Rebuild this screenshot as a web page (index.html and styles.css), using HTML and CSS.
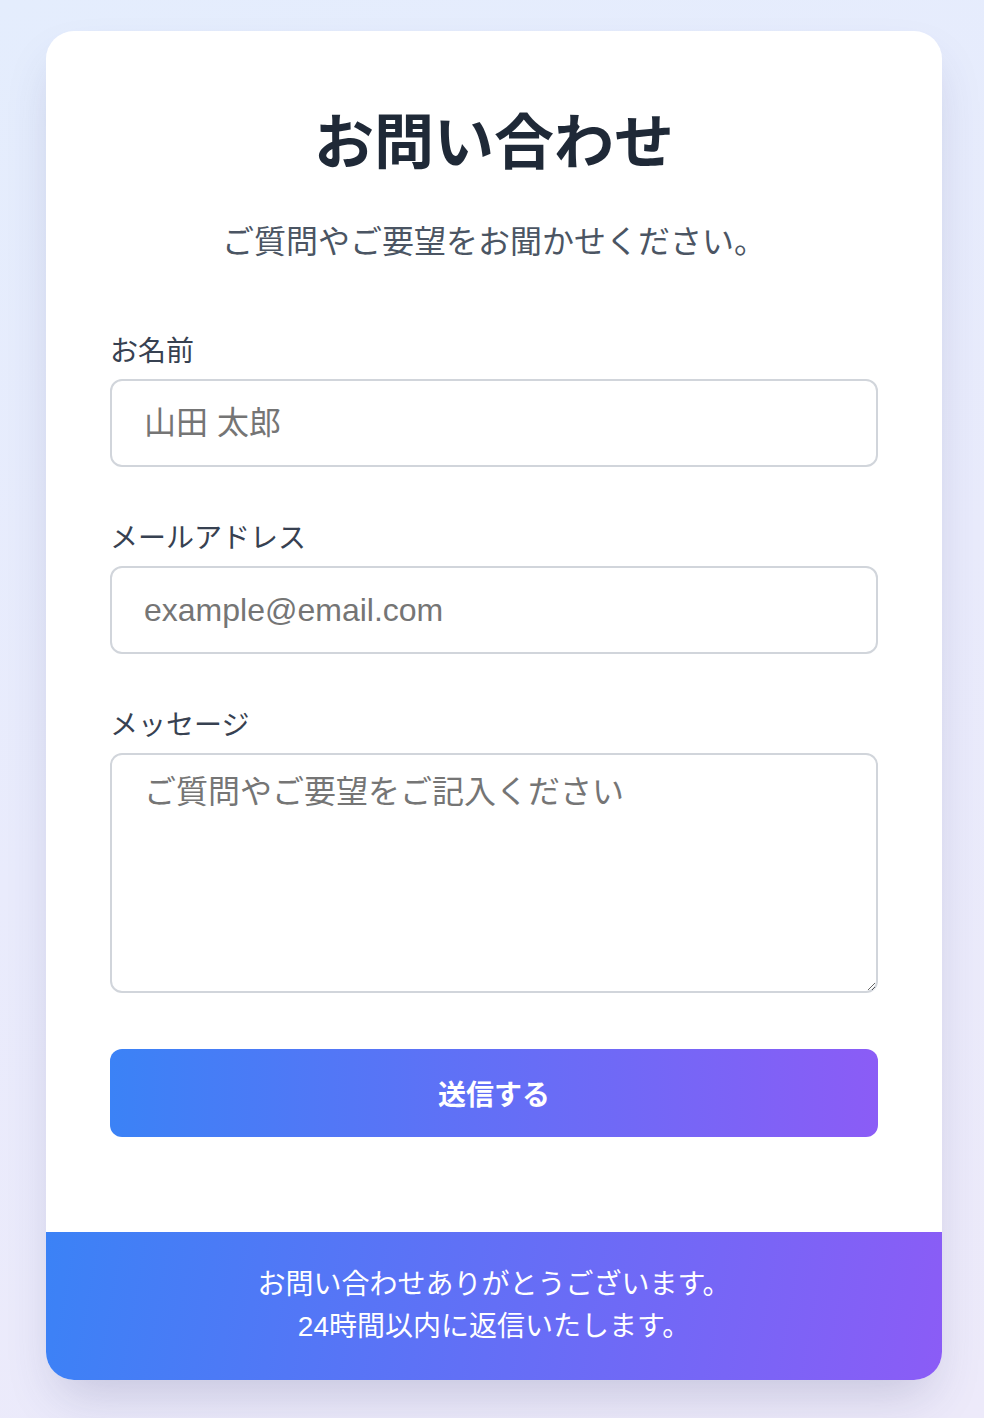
FILE: index.html
```html
<!DOCTYPE html>
<html lang="ja">
<head>
<meta charset="utf-8">
<title>お問い合わせ</title>
<link rel="stylesheet" href="styles.css">
</head>
<body>
<div class="card">
  <div class="content">
    <h1 class="title">お問い合わせ</h1>
    <p class="subtitle">ご質問やご要望をお聞かせください。</p>
    <form class="form">
      <div class="field">
        <label class="label" for="name">お名前</label>
        <input class="input" id="name" type="text" placeholder="山田 太郎">
      </div>
      <div class="field">
        <label class="label" for="email">メールアドレス</label>
        <input class="input" id="email" type="email" placeholder="example@email.com">
      </div>
      <div class="field">
        <label class="label" for="msg">メッセージ</label>
        <textarea class="textarea" id="msg" placeholder="ご質問やご要望をご記入ください"></textarea>
      </div>
      <button class="submit" type="button">送信する</button>
    </form>
  </div>
  <div class="footer">
    <p>お問い合わせありがとうございます。</p>
    <p>24時間以内に返信いたします。</p>
  </div>
</div>
</body>
</html>
```

FILE: styles.css
```css
* { box-sizing: border-box; }
html, body { margin: 0; padding: 0; }
body {
  min-height: 1418px;
  background: linear-gradient(160deg, #e4edfd 0%, #e9ebfc 50%, #edeafa 100%);
  font-family: "Liberation Sans", "Noto Sans CJK JP", sans-serif;
  display: flex;
  justify-content: center;
  align-items: flex-start;
  padding-top: 31px;
  padding-left: 4px;
}
.card {
  width: 896px;
  background: #ffffff;
  border-radius: 28px;
  overflow: hidden;
  box-shadow: 0 25px 50px -12px rgba(60, 60, 120, 0.22);
}
.content {
  padding: 71px 64px 95px;
}
.title {
  margin: 0;
  font-family: "Noto Sans CJK JP", sans-serif;
  font-size: 60px;
  line-height: 72px;
  font-weight: 700;
  color: #1f2937;
  text-align: center;
}
.subtitle {
  margin: 41px 0 0;
  font-family: "Noto Sans CJK JP", sans-serif;
  font-size: 32px;
  line-height: 48px;
  color: #4b5563;
  text-align: center;
}
.form {
  margin-top: 66px;
  display: flex;
  flex-direction: column;
}
.field {
  display: flex;
  flex-direction: column;
  margin-bottom: 49px;
}
.label {
  font-family: "Noto Sans CJK JP", sans-serif;
  font-size: 28px;
  line-height: 40px;
  color: #374151;
  margin-bottom: 10px;
}
.input, .textarea {
  width: 100%;
  border: 2px solid #d1d5db;
  border-radius: 12px;
  font-family: "Liberation Sans", "Noto Sans CJK JP", sans-serif;
  font-size: 32px;
  color: #111827;
  background: #fff;
  outline: none;
}
.input {
  height: 88px;
  padding: 0 32px;
}
.textarea {
  height: 240px;
  padding: 17px 32px;
  line-height: 40px;
  resize: vertical;
  display: block;
}
.input::placeholder, .textarea::placeholder {
  color: #757575;
}
.field:last-of-type { margin-bottom: 56px; }
.submit {
  height: 88px;
  border: none;
  border-radius: 12px;
  background: linear-gradient(90deg, #3b82f6 0%, #8b5cf6 100%);
  color: #ffffff;
  font-family: "Noto Sans CJK JP", sans-serif;
  font-size: 28px;
  font-weight: 700;
  cursor: pointer;
}
.footer {
  background: linear-gradient(100deg, #3b82f6 0%, #8b5cf6 100%);
  color: #ffffff;
  text-align: center;
  padding: 32px 0 32px;
  font-family: "Liberation Sans", "Noto Sans CJK JP", sans-serif;
  font-size: 28px;
  line-height: 42px;
}
.footer p { margin: 0; }
```
